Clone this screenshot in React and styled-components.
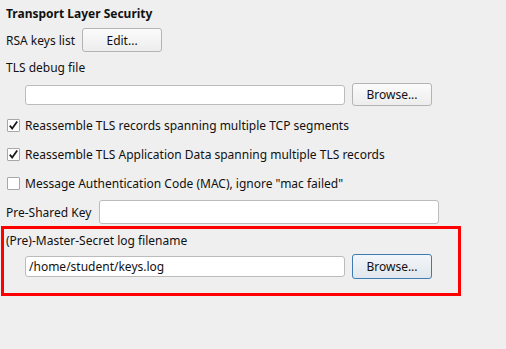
import React from "react";
import styled, { createGlobalStyle } from "styled-components";

const Global = createGlobalStyle`
  html, body { margin: 0; padding: 0; background: #efefef; }
  body { font-family: "Noto Sans", "DejaVu Sans", sans-serif; font-size: 12px; color: #111; }
  * { box-sizing: border-box; }
`;

const Page = styled.div`
  width: 506px;
  height: 349px;
  background: #efefef;
  display: flex;
  flex-direction: column;
`;

const Title = styled.div`
  height: 28px;
  line-height: 28px;
  padding-left: 6px;
  font-weight: bold;
`;

const Row = styled.div`
  display: flex;
  align-items: center;
  height: ${(p) => p.h}px;
  padding-left: ${(p) => p.pl ?? 6}px;
  margin-top: ${(p) => p.mt ?? 0}px;
  gap: ${(p) => p.gap ?? 7}px;
`;

const Spacer = styled.div`
  height: ${(p) => p.h}px;
`;

const Label = styled.div`
  white-space: nowrap;
`;

const Button = styled.button`
  font: inherit;
  color: #111;
  width: 80px;
  height: ${(p) => p.h ?? 24}px;
  border-radius: 3px;
  border: 1px solid ${(p) => (p.focus ? "#3d7bb0" : "#b4b4b4")};
  background: ${(p) =>
    p.focus
      ? "linear-gradient(#f3f6f9, #e1e7ed)"
      : "linear-gradient(#fbfbfb, #ededed)"};
  padding: 0;
  text-align: center;
`;

const Input = styled.div`
  width: ${(p) => p.w}px;
  height: ${(p) => p.h ?? 20}px;
  background: #fff;
  border: 1px solid #bcbcbc;
  border-radius: 3px;
  display: flex;
  align-items: center;
  padding-left: 3px;
  font-size: 12px;
`;

const CheckRow = styled.div`
  display: flex;
  align-items: center;
  height: 29px;
  padding-left: 7px;
  gap: 5px;
`;

const Box = styled.div`
  width: 13px;
  height: 13px;
  background: #fff;
  border: 1px solid #a8a8a8;
  border-radius: 1px;
  display: flex;
  align-items: center;
  justify-content: center;
`;

const Frame = styled.div`
  margin: 2px 0 0 1px;
  width: 460px;
  height: 70px;
  border: 3px solid #ff0000;
  display: flex;
  flex-direction: column;
`;

const Check = () => (
  <svg width="11" height="11" viewBox="0 0 11 11">
    <path d="M1.8 5.6 L4.2 8.6 L9.2 1.6" fill="none" stroke="#1a1a1a" strokeWidth="1.8" />
  </svg>
);

const CheckItem = ({ checked, children }) => (
  <CheckRow>
    <Box>{checked && <Check />}</Box>
    <Label>{children}</Label>
  </CheckRow>
);

export default function App() {
  return (
    <Page>
      <Global />
      <Title>Transport Layer Security</Title>
      <Row h={24}>
        <Label>RSA keys list</Label>
        <Button>Edit...</Button>
      </Row>
      <Row h={31}>
        <Label>TLS debug file</Label>
      </Row>
      <Row h={23} pl={25}>
        <Input w={320} />
        <Button h={23}>Browse...</Button>
      </Row>
      <Spacer h={5} />
      <CheckItem checked>Reassemble TLS records spanning multiple TCP segments</CheckItem>
      <CheckItem checked>Reassemble TLS Application Data spanning multiple TLS records</CheckItem>
      <CheckItem>Message Authentication Code (MAC), ignore "mac failed"</CheckItem>
      <Row h={24} mt={2} gap={8}>
        <Label>Pre-Shared Key</Label>
        <Input w={340} h={24} />
      </Row>
      <Frame>
        <Row h={22} pl={2}>
          <Label>(Pre)-Master-Secret log filename</Label>
        </Row>
        <Row h={25} pl={21} mt={3}>
          <Input w={320} h={21}>/home/student/keys.log</Input>
          <Button h={25} focus>Browse...</Button>
        </Row>
      </Frame>
    </Page>
  );
}
